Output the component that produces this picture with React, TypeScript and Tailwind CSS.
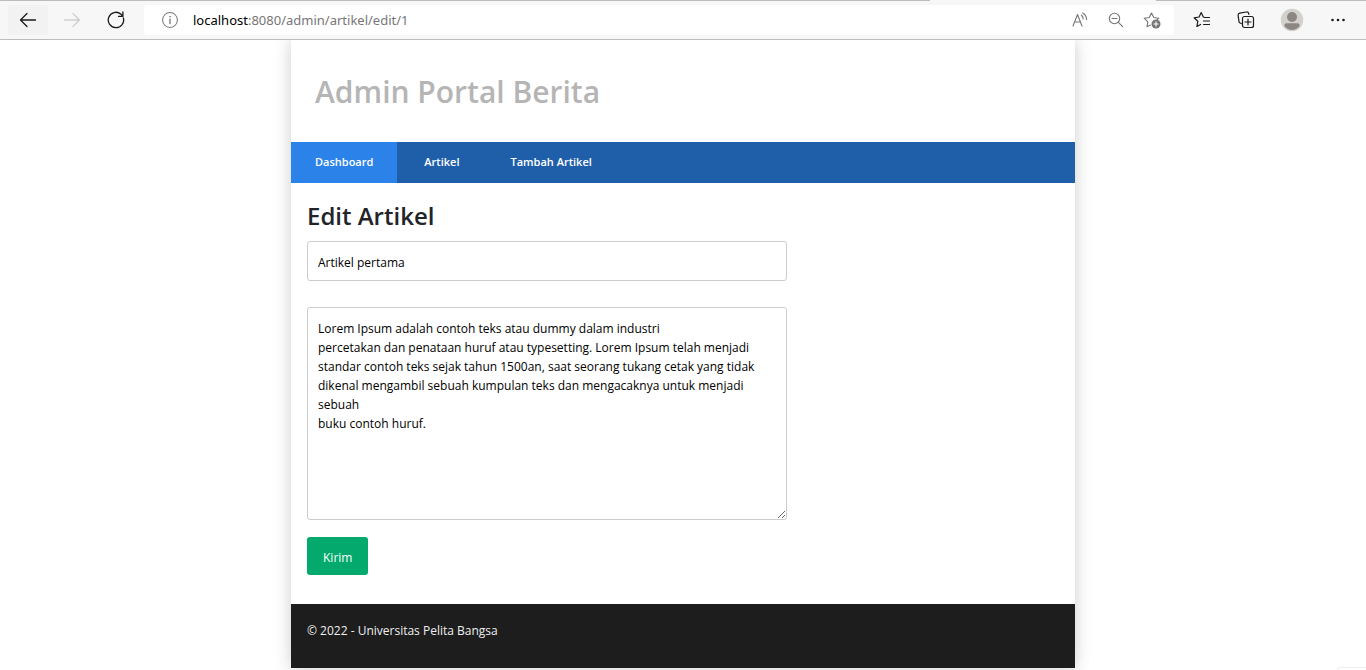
import type { ReactNode } from "react";

const ICON = {
  fill: "none",
  stroke: "currentColor",
  strokeLinecap: "round",
  strokeLinejoin: "round",
} as const;

function ToolButton({ label, className, children }: { label: string; className: string; children: ReactNode }) {
  return (
    <button type="button" aria-label={label} className={`flex shrink-0 items-center justify-center ${className}`}>
      {children}
    </button>
  );
}

function BrowserBar() {
  return (
    <header className="relative z-10 flex h-10 items-center border-y border-t-[#bcbcbc] border-b-[#bdbdbd] bg-[#f7f7f7] pr-2 pl-2 text-[#1b1b1b]">
      <div className="absolute -top-px right-[210px] h-px w-[226px] bg-[#f7f7f7]" />
      <ToolButton label="Back" className="h-[30px] w-10 rounded bg-[#f2f2f2]">
        <svg width="18" height="18" viewBox="0 0 18 18" {...ICON} strokeWidth="1.3">
          <path d="M16.5 9H1.5M8 2.5 1.5 9 8 15.5" />
        </svg>
      </ToolButton>
      <ToolButton label="Forward" className="ml-1 h-[30px] w-10 text-[#cfcfcf]">
        <svg width="18" height="18" viewBox="0 0 18 18" {...ICON} strokeWidth="1.3">
          <path d="M1.5 9h15M10 2.5 16.5 9 10 15.5" />
        </svg>
      </ToolButton>
      <ToolButton label="Refresh" className="ml-1 h-[30px] w-10">
        <svg width="18" height="18" viewBox="0 0 18 18" {...ICON} strokeWidth="1.3">
          <path d="M16.4 7A7.7 7.7 0 1 1 13.8 3L15.7 5M15.9 1v4.4H11.5" />
        </svg>
      </ToolButton>
      <div className="ml-2 flex h-[30px] min-w-0 flex-1 items-center rounded bg-white pr-1 pl-[18px] text-[#767676]">
        <svg width="16" height="16" viewBox="0 0 17 17" {...ICON} strokeWidth="1.1" className="shrink-0">
          <circle cx="8.5" cy="8.5" r="7.9" />
          <path d="M8.5 7.5v4.7" strokeWidth="1.4" />
          <circle cx="8.5" cy="5" r=".5" strokeWidth=".8" />
        </svg>
        <p className="ml-[15px] flex-1 font-['Noto_Sans','Open_Sans',sans-serif] text-[13px] leading-5">
          <span className="text-black">localhost</span>:8080/admin/artikel/edit/1
        </p>
        <ToolButton label="Read aloud" className="h-7 w-9">
          <svg width="16" height="16" viewBox="0 0 16 16" {...ICON} strokeWidth="1.1">
            <path d="M1 14 5.5 2.5 10 14M2.6 10h5.8M9.4 3.2c1.2.9 1.8 2.2 1.8 3.8M10.7 1c2.4 1.4 3.8 3.6 3.9 6.5" />
          </svg>
        </ToolButton>
        <ToolButton label="Zoom out" className="h-7 w-9">
          <svg width="16" height="16" viewBox="0 0 16 16" {...ICON} strokeWidth="1.1">
            <circle cx="6.5" cy="6.5" r="5.2" />
            <path d="M4 6.5h5M10.4 10.4l4.2 4.2" />
          </svg>
        </ToolButton>
        <ToolButton label="Add to favorites" className="h-7 w-9">
          <svg width="18" height="18" viewBox="0 0 18 18" {...ICON} strokeWidth="1.1">
            <path d="M7.5 14 4 15.8l.8-5L1.2 7.2l5-.7L8.5 2l2.3 4.5 5 .7-1.8 1.7" />
            <circle cx="13" cy="13" r="4.5" fill="currentColor" stroke="none" />
            <path d="M13 10.9v4.2M10.9 13h4.2" stroke="white" />
          </svg>
        </ToolButton>
      </div>
      <ToolButton label="Favorites" className="ml-2 h-[30px] w-10">
        <svg width="18" height="18" viewBox="0 0 18 18" {...ICON} strokeWidth="1.2">
          <path d="M11.3 6.3 10.3 6 8.2 1.6 6.1 6l-5 .8 3.7 3.5-.9 5.2 3.7-2M11.5 6.5h5M10.5 10h6M10.5 13.5h6" />
        </svg>
      </ToolButton>
      <ToolButton label="Collections" className="ml-1 h-[30px] w-10">
        <svg width="18" height="18" viewBox="0 0 18 18" {...ICON} strokeWidth="1.2">
          <path d="M4.2 12.6 2.8 11.8a2 2 0 0 1-.8-1.2L1.1 4.3a2 2 0 0 1 1.6-2.2L9.5 1a2 2 0 0 1 2.2 1.5l.2.8" />
          <rect x="5.5" y="5.5" width="11" height="11" rx="2" />
          <path d="M11 8v6M8 11h6" />
        </svg>
      </ToolButton>
      <ToolButton label="Profile" className="ml-1.5 h-[30px] w-10">
        <svg width="24" height="24" viewBox="0 0 24 24">
          <circle cx="12" cy="12" r="11.2" fill="#d3d1cd" />
          <circle cx="12" cy="9" r="5" fill="#8c8783" />
          <path d="M4.2 17.5Q4.5 15.3 7 15.3h10q2.5 0 2.8 2.2A9.5 9.5 0 0 1 12 22a9.5 9.5 0 0 1-7.8-4.5Z" fill="#8c8783" />
        </svg>
      </ToolButton>
      <ToolButton label="Settings and more" className="ml-1.5 h-[30px] w-10">
        <svg width="16" height="4" viewBox="0 0 16 4" fill="currentColor">
          <circle cx="2.5" cy="2" r="1.3" />
          <circle cx="8" cy="2" r="1.3" />
          <circle cx="13.5" cy="2" r="1.3" />
        </svg>
      </ToolButton>
    </header>
  );
}

const ARTICLE = `Lorem Ipsum adalah contoh teks atau dummy dalam industri
percetakan dan penataan huruf atau typesetting. Lorem Ipsum telah menjadi
standar contoh teks sejak tahun 1500an, saat seorang tukang cetak yang tidak
dikenal mengambil sebuah kumpulan teks dan mengacaknya untuk menjadi
sebuah
buku contoh huruf.`;

export default function App() {
  return (
    <div className="relative min-h-screen overflow-hidden bg-white font-['Open_Sans','Noto_Sans',sans-serif] text-xs text-black">
      <BrowserBar />
      <div className="mx-auto max-w-[784px] bg-white shadow-[0_0_16px_rgba(0,0,0,0.2)]">
        <div className="px-6 pt-8 pb-[30px]">
          <h1 className="text-[30px] leading-10 font-semibold text-[#b5b5b5]">Admin Portal Berita</h1>
        </div>
        <nav className="flex bg-[#1f5faa] pb-px text-[11px] leading-10 font-semibold text-white">
          <a href="#dashboard" className="-mb-px bg-[#2b83ea] px-6">Dashboard</a>
          <a href="#artikel" className="px-[27px]">Artikel</a>
          <a href="#tambah" className="px-6">Tambah Artikel</a>
        </nav>
        <main className="px-4 pt-4 pb-[29px]">
          <h2 className="text-2xl leading-[34px] font-semibold text-[#212529]">Edit Artikel</h2>
          <form onSubmit={(e) => e.preventDefault()}>
            <input
              type="text"
              aria-label="Judul"
              defaultValue="Artikel pertama"
              className="mt-2 block h-10 w-full max-w-[480px] rounded-[3px] border border-[#cccccc] px-2.5 pt-0.5"
            />
            <textarea
              aria-label="Isi"
              defaultValue={ARTICLE}
              className="mt-[26px] block h-[213px] w-full max-w-[480px] rounded-[3px] border border-[#cccccc] px-2.5 py-[11px] leading-[19px]"
            />
            <button type="submit" className="mt-[17px] block h-[38px] rounded-[3px] bg-[#04aa6d] px-4 pt-1 text-white">
              Kirim
            </button>
          </form>
        </main>
        <footer className="bg-[#1d1d1d] px-4 pt-[17px] pb-[27px] leading-5 text-[#eeeeee]">© 2022 - Universitas Pelita Bangsa</footer>
      </div>
      <div className="absolute right-0 bottom-0 h-[3px] w-[29px] rounded-tl-sm border-t border-l border-[#f0f0f0]" />
    </div>
  );
}
